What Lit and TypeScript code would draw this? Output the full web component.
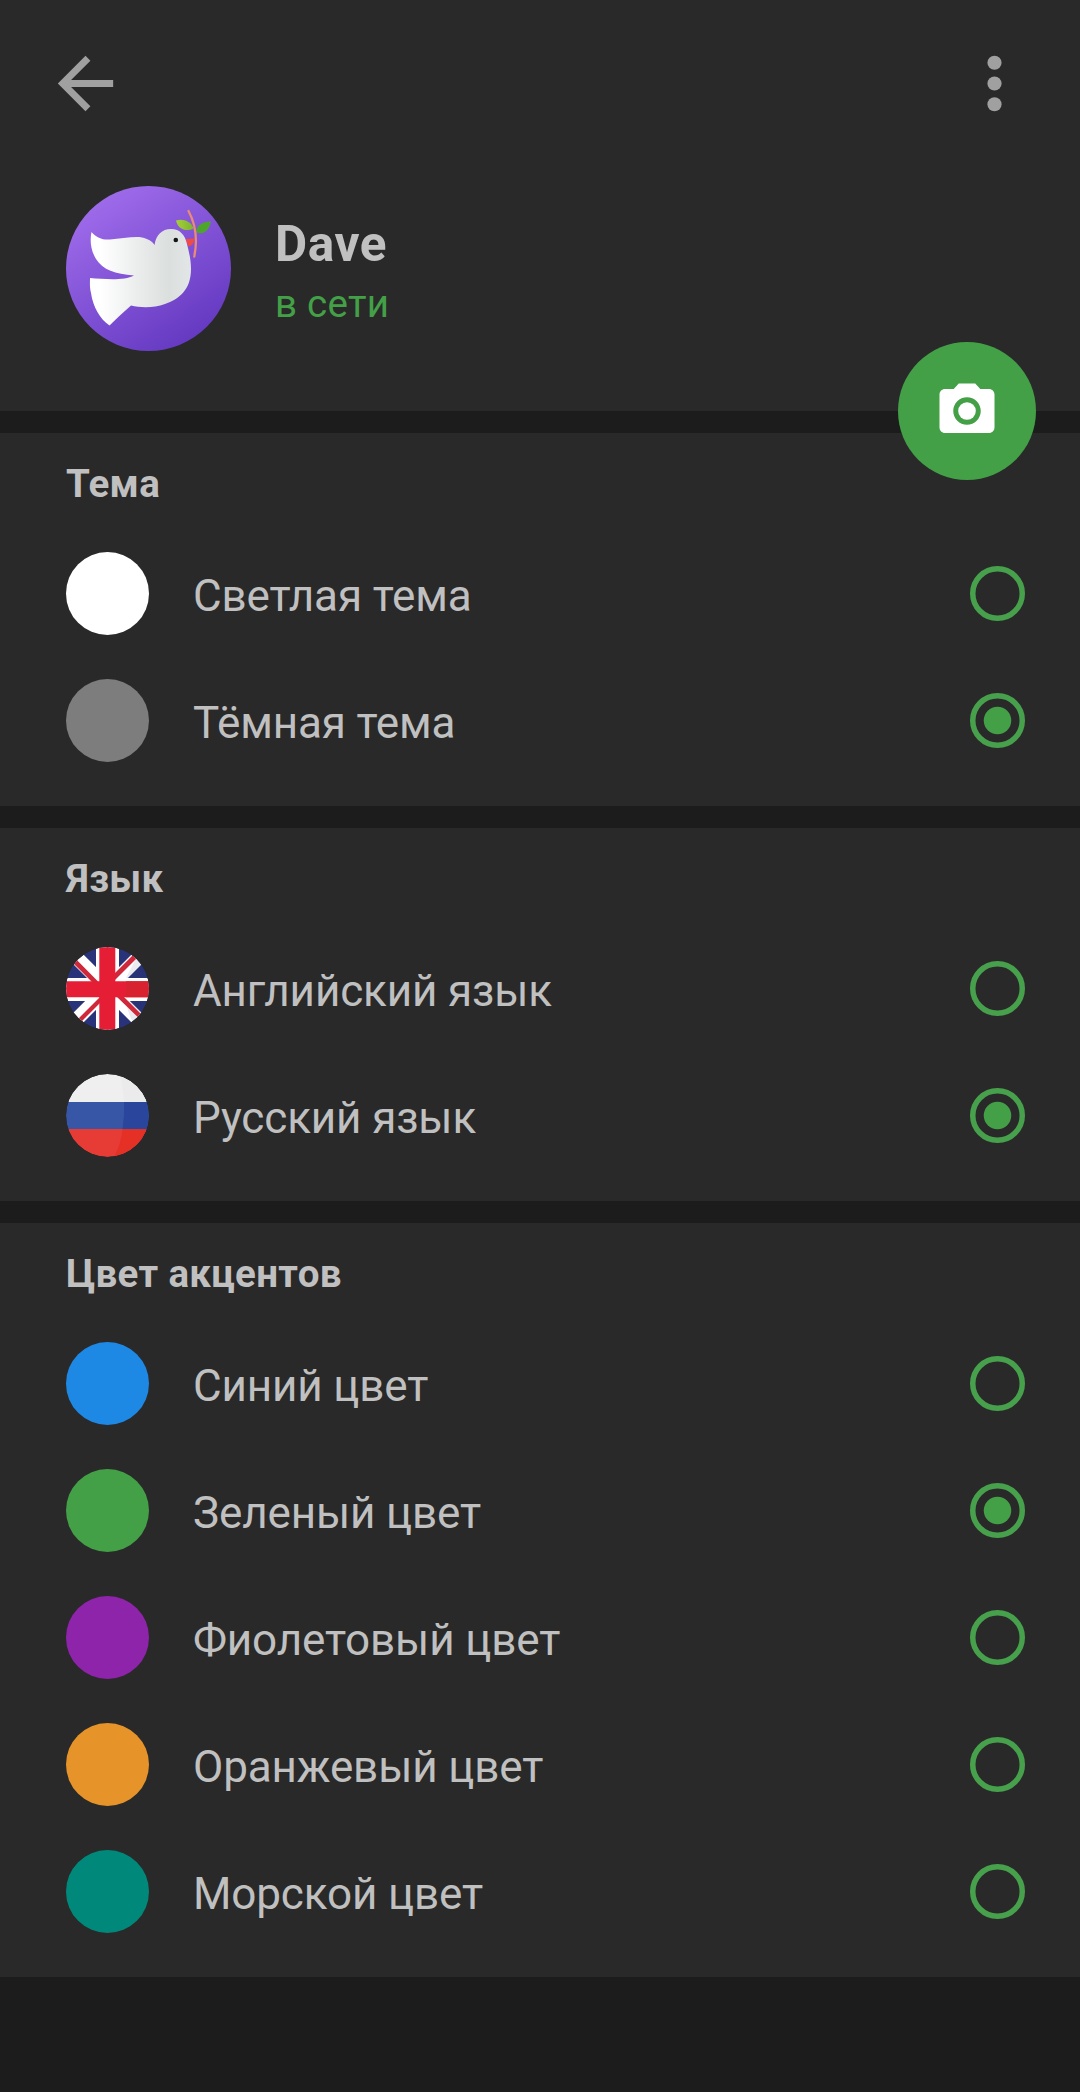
import { LitElement, html, css, svg, nothing } from "lit";
import { customElement, property, state } from "lit/decorators.js";

interface Choice {
  id: string;
  label: string;
  color?: string;
  flag?: "uk" | "ru";
}

interface Group {
  id: string;
  title: string;
  choices: Choice[];
}

const GROUPS: Group[] = [
  {
    id: "theme",
    title: "Тема",
    choices: [
      { id: "light", label: "Светлая тема", color: "#ffffff" },
      { id: "dark", label: "Тёмная тема", color: "#7d7d7d" },
    ],
  },
  {
    id: "language",
    title: "Язык",
    choices: [
      { id: "en", label: "Английский язык", flag: "uk" },
      { id: "ru", label: "Русский язык", flag: "ru" },
    ],
  },
  {
    id: "accent",
    title: "Цвет акцентов",
    choices: [
      { id: "blue", label: "Синий цвет", color: "#1e88e5" },
      { id: "green", label: "Зеленый цвет", color: "#43a047" },
      { id: "purple", label: "Фиолетовый цвет", color: "#8e24aa" },
      { id: "orange", label: "Оранжевый цвет", color: "#e6942a" },
      { id: "teal", label: "Морской цвет", color: "#00897b" },
    ],
  },
];

const ukFlag = svg`
  <clipPath id="disc"><circle cx="41.5" cy="41.5" r="41.5" /></clipPath>
  <g clip-path="url(#disc)">
    <rect width="83" height="83" fill="#29337a" />
    <path d="M0 0L83 83M83 0L0 83" stroke="#fff" stroke-width="14" />
    <path d="M30 -1H53V31H84V54H53V84H30V54H-1V31H30Z" fill="#fff" />
    <path d="M60 31L76 0H83V31ZM60 54H83V83H72Q62 70 60 54Z" fill="#1c2a50" fill-opacity="0.09" />
    <path d="M0 9L0 2L34 36.5V43ZM75 0H82L47 35H40ZM83 75V81L49 48V41ZM7 83H1L35 49H41Z" fill="#d0283b" />
    <path d="M33.3 -1H49.3V34.3H84V50.3H49.3V84H33.3V50.3H-1V34.3H33.3Z" fill="#e61e35" />
    <path d="M60 34.300H83V50.300H60Z" fill="#d9222f" />
  </g>`;

const ruFlag = svg`
  <clipPath id="disc"><circle cx="41.5" cy="41.5" r="41.5" /></clipPath>
  <g clip-path="url(#disc)">
    <rect width="83" height="28" fill="#efefef" />
    <rect y="28" width="83" height="27.3" fill="#3757a6" />
    <rect y="55" width="83" height="28" fill="#e73b36" />
    <path d="M58 28H83V55.3H56.5Q58.5 42 58 28Z" fill="#2a469c" />
    <path d="M56.5 55.3H83V83H48Q55 70 56.5 55.3Z" fill="#e53026" />
    <path d="M54 0Q57 12 58 28H83V0Z" fill="#ebebeb" />
  </g>`;

@customElement("choice-row")
export class ChoiceRow extends LitElement {
  @property({ attribute: false }) choice!: Choice;
  @property({ type: Boolean }) selected = false;

  static styles = css`
    :host {
      display: block;
    }
    .row {
      display: flex;
      align-items: center;
      height: 127px;
      padding: 0 55.5px 0 66px;
      box-sizing: border-box;
      cursor: pointer;
    }
    .swatch {
      flex: none;
      width: 83px;
      height: 83px;
      border-radius: 50%;
      display: block;
    }
    .label {
      flex: 1;
      margin-left: 44px;
      padding-top: 5px;
      font-size: 44px;
      line-height: 52px;
      letter-spacing: -0.13px;
      color: #c0c0c0;
      white-space: nowrap;
    }
    .radio {
      flex: none;
      width: 55px;
      height: 55px;
      display: block;
    }
  `;

  render() {
    const c = this.choice;
    return html`
      <div class="row" role="radio" aria-checked=${this.selected ? "true" : "false"}>
        ${c.flag
          ? html`<svg class="swatch" viewBox="0 0 83 83">${c.flag === "uk" ? ukFlag : ruFlag}</svg>`
          : html`<span class="swatch" style="background:${c.color}"></span>`}
        <span class="label">${c.label}</span>
        <svg class="radio" viewBox="0 0 55 55">
          <circle cx="27.5" cy="27.5" r="24.75" fill="none" stroke="#47a04b" stroke-width="5.5" />
          ${this.selected ? svg`<circle cx="27.5" cy="27.5" r="13.75" fill="#43a047" />` : nothing}
        </svg>
      </div>
    `;
  }
}

@customElement("app-root")
export class AppRoot extends LitElement {
  @state() private selection: Record<string, string> = {
    theme: "dark",
    language: "ru",
    accent: "green",
  };

  static styles = css`
    :host {
      display: block;
      font-family: Roboto, "Noto Sans", sans-serif;
      color: #c0c0c0;
    }
    .screen {
      display: flex;
      flex-direction: column;
      gap: 22px;
      min-height: 2092px;
      background: #1c1c1c;
    }
    .panel {
      background: #292929;
    }
    .header {
      position: relative;
      height: 411px;
      box-sizing: border-box;
      padding-top: 42px;
    }
    .bar {
      display: flex;
      justify-content: space-between;
      padding: 0 44px;
    }
    .icon {
      width: 83px;
      height: 83px;
      display: block;
      fill: #a0a0a0;
    }
    .profile {
      display: flex;
      align-items: center;
      gap: 44px;
      padding: 61px 66px 0;
    }
    .avatar {
      width: 165px;
      height: 165px;
      display: block;
    }
    .name {
      font-size: 49.5px;
      line-height: 58px;
      font-weight: 700;
      letter-spacing: 0.6px;
      padding-top: 4px;
    }
    .status {
      font-size: 38.5px;
      line-height: 46px;
      letter-spacing: 0.25px;
      padding-top: 8px;
      color: #43a047;
    }
    .fab {
      position: absolute;
      right: 44px;
      bottom: -69px;
      width: 138px;
      height: 138px;
      border: 0;
      padding: 0;
      border-radius: 50%;
      background: #43a047;
      display: flex;
      align-items: center;
      justify-content: center;
    }
    .camera {
      width: 66px;
      height: 66px;
      fill: #fff;
    }
    .group {
      padding-bottom: 22px;
    }
    .title {
      height: 97px;
      box-sizing: border-box;
      margin: 0;
      padding: 28px 66px 0;
      font-size: 38.5px;
      line-height: 46px;
      font-weight: 700;
      letter-spacing: 0.33px;
    }
  `;

  private pick(group: string, id: string) {
    this.selection = { ...this.selection, [group]: id };
  }

  private renderAvatar() {
    return html`
      <svg class="avatar" viewBox="0 0 165 165">
        <defs>
          <linearGradient id="sky" x1="0.2" y1="0.05" x2="0.8" y2="0.95">
            <stop offset="0" stop-color="#9f6ceb" />
            <stop offset="1" stop-color="#6338c0" />
          </linearGradient>
          <linearGradient id="body" x1="0" y1="0" x2="1" y2="0">
            <stop offset="0.1" stop-color="#ffffff" />
            <stop offset="0.6" stop-color="#e4e7e6" />
            <stop offset="0.78" stop-color="#dbdfde" />
            <stop offset="1" stop-color="#e3e6e6" />
          </linearGradient>
          <linearGradient id="leaf" x1="0" y1="0" x2="1" y2="0">
            <stop offset="0" stop-color="#a6cf38" />
            <stop offset="1" stop-color="#7cb32f" />
          </linearGradient>
        </defs>
        <circle cx="82.5" cy="82.5" r="82.5" fill="url(#sky)" />
        <path d="M119.500 53L128.500 52.500Q128 59 122.500 60.500Z" fill="#f04a45" />
        <path
          d="M25.500 46C31 52 36 54 44 53.500C55 53 68 50 76 51.500C82 53 86 55 88.500 59C90 49 96 43 105 43C114 43 119 49 121 58C123 66 125 74 125 83C125 104 113 113 99 118C88 122 75 122 65 119.500Q53 130 43.500 139.500C34 133 27 121 25 107C23.500 101 24 97 24 92C38 93 58 95 68 89.500C49 88 37 84 30 73C24 63 24 53 25.500 46Z"
          fill="url(#body)"
        />
        <circle cx="109.800" cy="54" r="2.300" fill="#151515" />
        <path d="M110 34.500C117 32.500 125 35 127.500 42.500C121 46 112 44 110 34.500Z" fill="url(#leaf)" />
        <path d="M130 46C131 38 138 35.500 145 35.500C143 44 138 50 130 46Z" fill="#4da52c" />
        <path d="M122.500 25C129 37 132 52 128.300 70.500" fill="none" stroke="#e98b78" stroke-width="2.300" stroke-linecap="round" />
      </svg>
    `;
  }

  render() {
    return html`
      <main class="screen">
        <header class="panel header">
          <nav class="bar">
            <svg class="icon" viewBox="0 0 24 24">
              <path d="M20 11H7.830l5.590-5.590L12 4l-8 8 8 8 1.410-1.410L7.830 13H20z" />
            </svg>
            <svg class="icon" viewBox="0 0 24 24">
              <circle cx="12" cy="6" r="2.050" />
              <circle cx="12" cy="12" r="2.050" />
              <circle cx="12" cy="18" r="2.050" />
            </svg>
          </nav>
          <div class="profile">
            ${this.renderAvatar()}
            <div>
              <div class="name">Dave</div>
              <div class="status">в сети</div>
            </div>
          </div>
          <button class="fab">
            <svg class="camera" viewBox="0 0 24 24">
              <circle cx="12" cy="12" r="3.200" />
              <path
                d="M9 2L7.170 4H4c-1.100 0-2 .9-2 2v12c0 1.100.9 2 2 2h16c1.100 0 2-.9 2-2V6c0-1.100-.9-2-2-2h-3.170L15 2H9zm3 15c-2.760 0-5-2.240-5-5s2.240-5 5-5 5 2.240 5 5-2.240 5-5 5z"
              />
            </svg>
          </button>
        </header>
        ${GROUPS.map(
          (g) => html`
            <section class="panel group" role="radiogroup">
              <h2 class="title">${g.title}</h2>
              ${g.choices.map(
                (c) => html`<choice-row
                  .choice=${c}
                  .selected=${this.selection[g.id] === c.id}
                  @click=${() => this.pick(g.id, c.id)}
                ></choice-row>`
              )}
            </section>
          `
        )}
      </main>
    `;
  }
}
